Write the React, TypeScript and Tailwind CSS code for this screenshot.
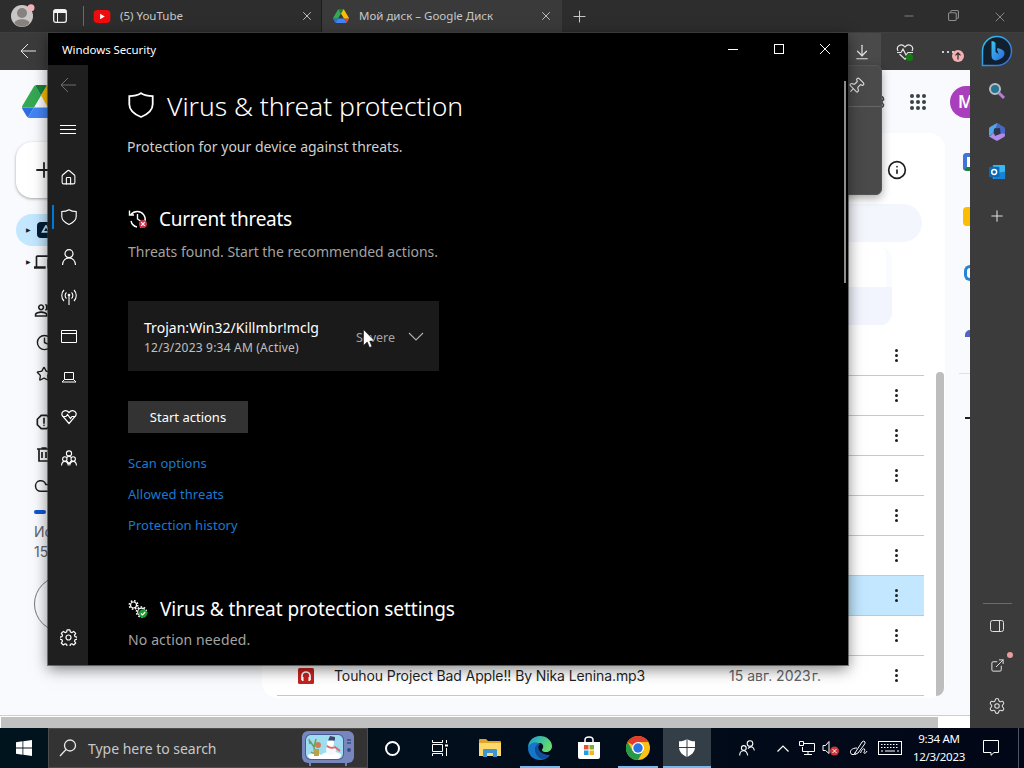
import type { ReactNode } from 'react';
import {
  ArrowDownToLine,
  Clock,
  Cloud,
  ExternalLink,
  House,
  Info,
  Minus,
  Pin,
  Plus,
  Settings,
  Star,
  X,
} from 'lucide-react';
import { MdOutlineDevices, MdOutlinePeopleAlt, MdOutlineReport } from 'react-icons/md';

const rows = [355, 395, 435, 475, 515, 555, 595, 635];

function DriveLogo({ className }: { className: string }) {
  return (
    <svg viewBox="0 0 87.3 78" className={className} preserveAspectRatio="none">
      <path d="m6.6 66.85 3.85 6.65c.8 1.4 1.95 2.5 3.3 3.3l13.75-23.8h-27.5c0 1.55.4 3.1 1.2 4.5z" fill="#2d6fe0" />
      <path d="m43.65 25-13.75-23.8c-1.35.8-2.5 1.9-3.3 3.3l-25.4 44a9.06 9.06 0 0 0 -1.2 4.5h27.5z" fill="#34a853" />
      <path d="m73.55 76.8c1.35-.8 2.5-1.9 3.3-3.3l1.6-2.75 7.65-13.25c.8-1.4 1.2-2.95 1.2-4.5h-27.502l5.852 11.5z" fill="#ea4335" />
      <path d="m43.65 25 13.75-23.8c-1.35-.8-2.9-1.2-4.5-1.2h-18.5c-1.6 0-3.15.45-4.5 1.2z" fill="#188038" />
      <path d="m59.8 53h-32.3l-13.75 23.8c1.35.8 2.9 1.2 4.5 1.2h50.8c1.6 0 3.15-.45 4.5-1.2z" fill="#4285f4" />
      <path d="m73.4 26.5-12.7-22c-.8-1.4-1.95-2.5-3.3-3.3l-13.75 23.8 16.15 28h27.45c0-1.55-.4-3.1-1.2-4.5z" fill="#fbbc04" />
    </svg>
  );
}

function Shield({ className }: { className: string }) {
  return (
    <svg viewBox="0 0 16 16" className={className} fill="none" stroke="currentColor" strokeWidth="1.1">
      <path d="M8 .7C6 2 3.4 2.5.8 2.5V7.5c0 3.6 2.7 6 7.2 7.9 4.5-1.9 7.2-4.3 7.2-7.9V2.5C12.6 2.5 10 2 8 .7Z" />
    </svg>
  );
}

function BackArrow({ className }: { className: string }) {
  return (
    <svg viewBox="0 0 16 16" className={className} fill="none" stroke="currentColor">
      <path d="M16 8H1M8 1 1 8l7 7" />
    </svg>
  );
}

function TabStrip() {
  return (
    <div className="flex h-[33px] shrink-0 items-center border-b border-[#3f3f3f] bg-[#2d2d2d] text-[#c8c8c8]">
      <div className="flex w-[83px] items-center gap-[18px] pl-[11px]">
        <svg viewBox="0 0 24 24" className="h-6 w-6">
          <circle cx="11" cy="12" r="11" fill="#c9c7c5" />
          <circle cx="11" cy="9" r="5" fill="#86827f" />
          <path d="M3.5 19c1-5 14-5 15 0-4 5-11 5-15 0Z" fill="#86827f" />
          <circle cx="20" cy="3.8" r="3.5" fill="#f3b2bb" />
        </svg>
        <svg viewBox="0 0 14 14" className="h-[14px] w-[14px]" fill="none" stroke="#f2f2f2">
          <rect x=".7" y=".7" width="12.6" height="12.6" rx="2" strokeWidth="1.3" />
          <path d="M1 2.5h12" strokeWidth="3" />
          <path d="M4.5 4v9" />
        </svg>
      </div>
      <div className="h-5 w-px bg-[#6a6a6a]" />
      <div className="flex h-full w-[238px] items-center border-r border-[#1c1c1c] pl-[9px] pr-[7px]">
        <svg viewBox="0 0 18 14" className="h-[13px] w-[18px]">
          <rect width="18" height="14" rx="4" fill="#f00c0c" />
          <path d="M7 4v6l5-3z" fill="#fff" />
        </svg>
        <span className="ml-[9px] flex-1 whitespace-nowrap text-[11.5px]">(5) YouTube</span>
        <X className="h-[14px] w-[14px]" strokeWidth={1.6} />
      </div>
      <div className="flex h-full w-[240px] items-center bg-[#3a3a3a] pl-[11px] pr-[9px]">
        <DriveLogo className="h-[14px] w-4" />
        <span className="ml-[10px] flex-1 whitespace-nowrap text-[11.5px]">Мой диск – Google Диск</span>
        <X className="h-[14px] w-[14px]" strokeWidth={1.6} />
      </div>
      <Plus className="ml-[8px] h-[19px] w-[19px]" strokeWidth={1.3} />
      <div className="ml-auto flex w-[138px] justify-around pt-px text-[#8d8d8d]">
        <Minus className="h-[14px] w-[14px]" strokeWidth={1.5} />
        <svg viewBox="0 0 10 10" className="mt-px h-[11px] w-[11px]" fill="none" stroke="currentColor">
          <rect x=".5" y="2.5" width="7" height="7" rx="1" />
          <path d="M2.500 2V1.500a1 1 0 0 1 1-1h5a1 1 0 0 1 1 1v5a1 1 0 0 1-1 1H8" />
        </svg>
        <X className="h-[16px] w-[16px]" strokeWidth={1.4} />
      </div>
    </div>
  );
}

function HeartPulseOutline({ className }: { className: string }) {
  return (
    <svg viewBox="0 0 18 18" className={className} fill="none" stroke="currentColor" strokeWidth="1.2">
      <path d="M2 8C-.5 3 5.500-.5 9 4c3.500-4.500 9.500-1 7 4M3.500 11 9 16.200l5.500-5.200" />
      <path d="M1 9.500h4l2-3.500 3 6 2-2.500h5" />
    </svg>
  );
}

function Toolbar() {
  return (
    <div className="flex h-[37px] shrink-0 items-center bg-[#3b3b3b] text-[#e6e6e6]">
      <BackArrow className="ml-5 h-4 w-4 -mt-px" />
      <div className="ml-auto flex h-full w-[34px] items-center justify-center bg-[#4a4a4a] pr-[5px]">
        <ArrowDownToLine className="h-[18px] w-[18px] shrink-0" strokeWidth={1.6} />
      </div>
      <div className="relative ml-[15px]">
        <HeartPulseOutline className="h-[18px] w-[18px]" />
        <span className="absolute right-[1px] bottom-[0px] h-[7px] w-[7px] rounded-full bg-[#107c10]" />
      </div>
      <div className="relative ml-[28px] flex w-[28px] gap-[3px]">
        <span className="h-[2px] w-[2px] rounded-full bg-white" />
        <span className="h-[2px] w-[2px] rounded-full bg-white" />
        <span className="h-[2px] w-[2px] rounded-full bg-white" />
        <svg viewBox="0 0 12 12" className="absolute -top-px left-[10px] h-3 w-3">
          <circle cx="6" cy="6" r="6" fill="#f4b0b0" />
          <path d="M6 9.500V3M3.500 5.300 6 2.800l2.500 2.500" fill="none" stroke="#2b2b2b" strokeWidth="1.2" />
        </svg>
      </div>
    </div>
  );
}

function DriveNavRow({ children, caret = false }: { children: ReactNode; caret?: boolean }) {
  return (
    <div className="flex h-8 items-center pl-[10px]">
      <span className="w-2 shrink-0 text-[6px]">{caret && '▶'}</span>
      {children}
    </div>
  );
}

function DriveNav() {
  return (
    <div className="flex w-[277px] shrink-0 flex-col pl-4 text-[#1f1f1f]">
      <DriveLogo className="mt-[15px] ml-[6px] h-[33px] w-[38px]" />
      <div className="mt-[24px] flex h-[56px] w-[110px] items-center rounded-2xl bg-white pl-[16px] shadow-[0_1px_3px_rgba(0,0,0,0.35)]">
        <Plus className="h-[24px] w-[24px]" strokeWidth={1.8} />
      </div>
      <div className="mt-4 w-[230px] rounded-full bg-[#c2e7ff]">
        <DriveNavRow caret>
          <span className="ml-[3px] flex h-4 w-[17px] items-center justify-center rounded-sm bg-[#001d35] pb-[3px]">
            <svg viewBox="0 0 10 9" className="h-[8px] w-[10px]" fill="none" stroke="#c2e7ff" strokeWidth="2">
              <path d="M5 1 1.200 7.800h7.600Z" />
            </svg>
          </span>
        </DriveNavRow>
      </div>
      <DriveNavRow caret>
        <MdOutlineDevices className="h-5 w-5" />
      </DriveNavRow>
      <div className="mt-4">
        <DriveNavRow><MdOutlinePeopleAlt className="h-[19px] w-[19px]" /></DriveNavRow>
        <DriveNavRow><Clock className="ml-0.5 h-[17px] w-[17px]" /></DriveNavRow>
        <DriveNavRow><Star className="ml-0.5 h-4 w-4" /></DriveNavRow>
      </div>
      <div className="mt-4">
        <DriveNavRow><MdOutlineReport className="h-5 w-5" /></DriveNavRow>
        <DriveNavRow>
          <svg viewBox="0 0 14 15" className="ml-[3px] h-[15px] w-[14px]" fill="none" stroke="currentColor" strokeWidth="1.7">
            <path d="M0 2h14M4.500 1h5M2 2v12h10V2M5 5v6M9 5v6" />
          </svg>
        </DriveNavRow>
        <DriveNavRow><Cloud className="h-[18px] w-[18px]" /></DriveNavRow>
      </div>
      <div className="ml-[18px] flex flex-col font-[Inter,sans-serif] text-[14px] leading-5 text-[#5f6368]">
        <span className="mt-2 mb-[8px] h-1 w-3 rounded-full bg-[#0b57d0]" />
        <span>Ис</span>
        <span>15</span>
        <span className="mt-[14px] h-[56px] w-[180px] rounded-full border border-[#747775]" />
      </div>
    </div>
  );
}

function Kebab() {
  return (
    <span className="flex flex-col gap-[2px]">
      <span className="h-[3px] w-[3px] rounded-full bg-[#1f1f1f]" />
      <span className="h-[3px] w-[3px] rounded-full bg-[#1f1f1f]" />
      <span className="h-[3px] w-[3px] rounded-full bg-[#1f1f1f]" />
    </span>
  );
}

function DriveFiles() {
  return (
    <div className="flex w-[668px] flex-col">
      {/* Account row */}
      <div className="flex h-[63px] items-center justify-end pr-[19px]">
        <Settings className="mr-[24px] h-5 w-5 text-[#444746]" />
        <span className="grid grid-cols-3 gap-[2px]">
          {[0, 1, 2, 3, 4, 5, 6, 7, 8].map((n) => (
            <span key={n} className="h-1 w-1 rounded-full bg-[#3c4043]" />
          ))}
        </span>
      </div>
      <div className="relative -ml-[15px] flex h-[565px] flex-col rounded-2xl bg-white pl-[15px]">
        <Info className="mt-[27px] ml-[610px] h-[20px] w-[20px] text-[#1f1f1f]" strokeWidth={2} />
        <div className="mt-[24px] h-[38px] w-[645px] rounded-full bg-[#f4f6fd]" />
        <div className="mt-[5px] ml-[400px] h-[78px] w-[215px] rounded-xl border-r-[6px] border-[#fafbff] pt-[40px]">
          <div className="h-[38px] w-[215px] rounded-br-xl bg-[#f2f5fe]" />
        </div>
        <div className="mt-[11px] w-[647px]">
          {rows.map((y) => (
            <div
              key={y}
              className={`flex h-10 items-center justify-end border-b border-[#c7c7c7] pr-[26px] ${
                y === 595 ? 'bg-[#c2e7ff]' : ''
              }`}
            >
              <Kebab />
            </div>
          ))}
          <div className="flex h-10 items-center border-b border-[#c7c7c7] pr-[26px] pl-[21px] font-[Inter,sans-serif] text-[14px]">
            <svg viewBox="0 0 16 16" className="h-4 w-4">
              <rect width="16" height="16" rx="1.500" fill="#c5221f" />
              <path d="M4 12V8a4 4 0 0 1 8 0v4M4.700 9v4M11.300 9v4" fill="none" stroke="#fff" strokeWidth="1.7" />
            </svg>
            <span className="ml-5 w-[395px] whitespace-nowrap tracking-[-0.1px] text-[#1f1f1f]">
              Touhou Project Bad Apple!! By Nika Lenina.mp3
            </span>
            <span className="flex-1 whitespace-nowrap text-[#5f6368]">
              15 авг. 2023<span className="ml-px">г.</span>
            </span>
            <Kebab />
          </div>
        </div>
        <div className="absolute top-[239px] right-[1px] h-[324px] w-2 rounded-t-sm rounded-br-lg bg-[#bdbdbd]" />
      </div>
    </div>
  );
}

function DriveSide() {
  return (
    <div className="flex flex-1 flex-col items-end overflow-hidden">
      <span className="mt-[16px] flex h-8 w-5 shrink-0 items-center overflow-hidden rounded-l-full bg-[#a93fbd] pl-2 text-[17px] font-semibold text-white">
        M
      </span>
      <span className="mt-[35px] h-[18px] w-[7px] rounded-l-sm border-4 border-r-0 border-[#4076d8] border-b-[#188038] bg-white" />
      <span className="mt-[36px] h-[19px] w-[7px] rounded-l-sm bg-[#fbbc04]" />
      <span className="mt-[39px] h-4 w-[6px] rounded-l-full border-[3px] border-r-0 border-[#2684d8]" />
      <span className="mt-[49px] h-[7px] w-[5px] rounded-tl-full bg-[#5461c8]" />
      <span className="mt-[36px] h-px w-[11px] bg-[#dddfe3]" />
      <span className="mt-[43px] h-[2px] w-[5px] bg-[#1f1f1f]" />
    </div>
  );
}

function EdgeSidebar() {
  return (
    <div className="flex w-[54px] shrink-0 flex-col items-center bg-[#3b3b3b] text-[#e0e0e0]">
      <svg viewBox="0 0 32 32" className="mt-[2px] h-8 w-8 shrink-0">
        <defs>
          <linearGradient id="bing" x1="0" y1="0" x2="1" y2="1">
            <stop offset="0" stopColor="#36c6f4" />
            <stop offset="1" stopColor="#3165d8" />
          </linearGradient>
        </defs>
        <path d="M1.500 30.500V16A14.500 14.500 0 1 1 16 30.500Z" fill="#11202c" stroke="url(#bing)" strokeWidth="1.5" />
        <path d="m10.500 6q3 .2 4 2v9l3.200 2-1.700-4.500q-.3-1.700 1.500-1.200Q24 15 23.500 19q-.5 4-8 6.500-5 0-5-5Z" fill="url(#bing)" />
      </svg>
      <svg viewBox="0 0 18 18" className="mt-[15px] h-[18px] w-[18px] shrink-0" fill="none">
        <circle cx="7" cy="7" r="5" fill="#277590" stroke="#b8bfc4" strokeWidth="2" />
        <path d="m11 11 5 5" stroke="#ba7bd8" strokeWidth="3" />
      </svg>
      <svg viewBox="0 0 18 18" className="mt-[23px] h-[18px] w-[18px] shrink-0">
        <path d="M9 0 2 4Q1 4.500 1 6v7l5-3V6l6-4Z" fill="#52a6e5" />
        <path d="m1 13.500 7 4q1 .5 2 0l6-3.500q1-.5 1-2V8l-5 3-5 2-1-3Z" fill="#b08be8" />
        <path d="m9 0 7 4q1 .5 1 2v5l-5-1V6L8 5Z" fill="#4867c2" />
        <path d="m6 6 6-1 .5 5.500L8 12 5.500 10Z" fill="#2e3550" />
      </svg>
      <svg viewBox="0 0 18 18" className="mt-[23px] h-[17px] w-[17px] shrink-0">
        <rect x="4" y="1" width="13" height="15" rx="1" fill="#35baf1" />
        <path d="m5 10 12-2v8H5Z" fill="#1683d8" />
        <rect x="0" y="3" width="11" height="11" rx="1" fill="#0968b8" />
        <circle cx="5.5" cy="8.5" r="2.6" fill="none" stroke="#fff" strokeWidth="1.5" />
      </svg>
      <Plus className="mt-[26px] h-[18px] w-[18px] shrink-0" strokeWidth={1.4} />
      <div className="mt-auto h-px w-[29px] bg-[#6b6b6b]" />
      <svg viewBox="0 0 14 12" className="mt-[16px] h-3 w-[14px] shrink-0" fill="none" stroke="currentColor">
        <rect x=".5" y=".5" width="13" height="11" rx="2" />
        <path d="M9.500 1v10" />
      </svg>
      <div className="relative mt-[26px]">
        <ExternalLink className="h-[15px] w-[15px]" strokeWidth={1.6} />
        <span className="absolute -top-[6px] -right-[8px] h-[6px] w-[6px] rounded-full bg-[#eb9c9c]" />
      </div>
      <Settings className="mt-[24px] mb-[13px] h-[18px] w-[18px] shrink-0" strokeWidth={1.4} />
    </div>
  );
}

function Browser() {
  return (
    <div className="relative flex h-[728px] flex-col">
      <TabStrip />
      <div className="flex min-h-0 flex-1">
        <div className="flex w-[970px] flex-col">
          <Toolbar />
          <div className="flex h-[645px] overflow-hidden bg-[#f8fafd]">
            <DriveNav />
            <DriveFiles />
            <DriveSide />
          </div>
          <div className="h-[13px] border-t border-[#cfcfcf] bg-white pt-px pl-px">
            <div className="h-[11px] w-[937px] bg-[#c1c1c1]" />
          </div>
        </div>
        <EdgeSidebar />
      </div>
      {/* Downloads flyout */}
      <div className="absolute top-[65px] left-[560px] h-[130px] w-[322px] rounded-md border border-[#555] bg-[#4a4a4a] shadow-[0_3px_10px_rgba(0,0,0,0.35)]">
        <div className="flex h-[41px] items-center justify-end border-b border-[#666] pr-[16px] text-[#e4e4e4]">
          <Pin className="h-[18px] w-[18px] rotate-45" strokeWidth={1.5} />
        </div>
      </div>
    </div>
  );
}

function SecurityNav() {
  const svg = 'h-4 w-4 shrink-0';
  return (
    <div className="flex w-10 shrink-0 flex-col items-center bg-[#1f1f1f] pl-px text-white">
      <div className="flex h-[40px] items-center pr-px text-[#6e6e6e]">
        <BackArrow className="h-4 w-4" />
      </div>
      <div className="mt-[4px] flex h-[40px] flex-col justify-center gap-[3px] pr-px">
        <span className="h-px w-4 bg-white" />
        <span className="h-px w-4 bg-white" />
        <span className="h-px w-4 bg-white" />
      </div>
      <div className="mt-[8px] flex h-10 items-center">
        <House className="h-[17px] w-[17px]" strokeWidth={1.5} />
      </div>
      <div className="-ml-px flex h-10 w-10 items-center">
        <span className="ml-1 h-6 w-[2px] bg-[#0078d7]" />
        <Shield className="ml-[7px] h-4 w-4" />
      </div>
      <div className="flex h-10 items-center">
        <svg viewBox="0 0 16 16" className={svg} fill="none" stroke="currentColor" strokeWidth="1.2">
          <circle cx="8" cy="4.7" r="4" />
          <path d="M1.500 16C2 6.500 14 6.500 14.500 16" />
        </svg>
      </div>
      <div className="flex h-10 items-center">
        <svg viewBox="0 0 16 16" className={svg} fill="none" stroke="currentColor" strokeWidth="1.1">
          <path d="M8 6v10M5.500 9.500c-1.800-1.500-1.800-4.500 0-6M10.500 9.500c1.800-1.500 1.800-4.500 0-6M3 12C0 9 0 4 3 1M13 12c3-3 3-8 0-11" />
          <circle cx="8" cy="6" r=".8" />
        </svg>
      </div>
      <div className="flex h-10 items-center">
        <svg viewBox="0 0 16 16" className={svg} fill="none" stroke="currentColor">
          <path d="M.5 1.500h15v12H.5ZM.5 4.500h15" />
        </svg>
      </div>
      <div className="flex h-10 items-center">
        <svg viewBox="0 0 16 16" className={svg} fill="none" stroke="currentColor">
          <path d="M3.500 3.500h9v7h-9ZM3.500 10.500l-2.500 2.500h14l-2.500-2.500" />
        </svg>
      </div>
      <div className="flex h-10 items-center">
        <svg viewBox="0 0 16 16" className={svg} fill="none" stroke="currentColor" strokeWidth="1.2">
          <path d="M8 3.500C4.500-.5-1 3 1.500 7L8 14.500 14.500 7C17 3 11.500-.5 8 3.500Z" />
          <path d="M1.500 7.500H5l1.500-2 3 4 1.500-2h3.500" />
        </svg>
      </div>
      <div className="flex h-[42px] items-center">
        <svg viewBox="0 0 16 16" className={svg} fill="none" stroke="currentColor" strokeWidth="1.1">
          <circle cx="8" cy="3.5" r="2.6" />
          <circle cx="3.8" cy="9" r="2.2" />
          <circle cx="12.2" cy="9" r="2.2" />
          <path d="M.5 15.500c.5-5.500 6-5.500 6.800 0M8.700 15.500c.8-5.500 6.300-5.500 6.800 0M5.500 7.500 8 6l2.500 1.500M6 11l2 2.500 2-2.500" />
        </svg>
      </div>
      <div className="mt-auto mb-[19px]">
        <svg viewBox="-8.500 -8.500 17 17" className="h-[17px] w-[17px]" fill="none" stroke="currentColor" strokeWidth="1.200" strokeLinejoin="round">
          <circle r="2.5" />
          <path d="M-1.400-7.600h2.800l.5 2.100 1.500.6 1.800-1.200 2 2-1.200 1.800.6 1.500 2.100.5v2l-2.100.5-.6 1.500 1.200 1.800-2 2-1.800-1.200-1.500.6-.5 2.100h-2.800l-.5-2.100-1.500-.6-1.800 1.200-2-2 1.200-1.800-.6-1.500-2.100-.5v-2l2.100-.5.6-1.500-1.200-1.800 2-2 1.800 1.200 1.500-.6Z" />
        </svg>
      </div>
    </div>
  );
}

function SecurityContent() {
  return (
    <div className="flex-1 overflow-hidden pl-10">
      <div className="mt-[21px] flex h-[38px] items-center">
        <Shield className="-mt-px h-[26px] w-[26px]" />
        <h1 className="ml-[13px] whitespace-nowrap pt-[3px] text-[26.5px] font-light tracking-[-0.03px]">
          Virus &amp; threat protection
        </h1>
      </div>
      <p className="mt-[13px] -ml-px text-[14px] leading-5 whitespace-nowrap text-[#cfcfcf]">
        Protection for your device against threats.
      </p>
      <div className="mt-[47px] flex h-[30px] items-center">
        <svg viewBox="0 0 20 20" className="h-5 w-5" fill="none" stroke="#fff" strokeWidth="1.4">
          <path d="M3 5.500A8 8 0 1 1 12 18M1.500 1.500v4.500H6M3 12a8 8 0 0 0 6 6M9.500 5v5l3 2" />
          <circle cx="15" cy="15" r="4" fill="#d8304a" stroke="none" />
          <path d="m13.200 13.200 3.600 3.600m0-3.600-3.600 3.600" strokeWidth="1.2" />
        </svg>
        <h2 className="ml-[11px] whitespace-nowrap text-[19px] tracking-[-0.25px]">Current threats</h2>
      </div>
      <p className="mt-[8px] text-[14px] leading-5 tracking-[-0.02px] whitespace-nowrap text-[#a3a3a3]">
        Threats found. Start the recommended actions.
      </p>

      <div className="mt-[39px] flex h-[70px] w-[311px] items-center bg-[#1a1a1a] pt-px pr-[15px] pl-4">
        <div className="flex-1 pt-px">
          <div className="whitespace-nowrap text-[14px] leading-5 tracking-[0.03px]">Trojan:Win32/Killmbr!mclg</div>
          <div className="whitespace-nowrap text-[12px] leading-[19px] tracking-[0.2px] text-[#c0c0c0]">
            12/3/2023 9:34 AM (Active)
          </div>
        </div>
        <span className="mt-[3px] mr-[13px] text-[12.5px] text-[#a5a5a5]">Severe</span>
        <svg viewBox="0 0 16 10" className="h-[10px] w-4" fill="none" stroke="#b0b0b0" strokeWidth="1.1">
          <path d="m1 1 7 7 7-7" />
        </svg>
      </div>
      <button className="mt-[30px] flex h-8 w-[120px] items-center justify-center bg-[#333] pt-px text-[13px]">
        Start actions
      </button>
      <div className="mt-[20px] flex flex-col gap-[11px] text-[13px] leading-5 tracking-[0.06px] text-[#1a7ad0]">
        <a>Scan options</a>
        <a>Allowed threats</a>
        <a>Protection history</a>
      </div>

      <div className="mt-[59px] flex h-[30px] items-center">
        <svg viewBox="0 0 20 20" className="h-5 w-5" fill="none" stroke="#fff">
          <circle cx="5.5" cy="6" r="3" strokeWidth="1.2" />
          <circle cx="5.5" cy="6" r="4.2" strokeWidth="1.6" strokeDasharray="1.6 1.7" />
          <circle cx="13.5" cy="13" r="3.8" strokeWidth="1.2" />
          <circle cx="13.5" cy="13" r="5" strokeWidth="1.6" strokeDasharray="1.6 1.54" />
          <circle cx="15" cy="14.5" r="4.2" fill="#1d9a35" stroke="none" />
          <path d="m13 14.500 1.500 1.500 2.700-3" strokeWidth="1.2" />
        </svg>
        <h2 className="ml-[12px] whitespace-nowrap text-[19px] tracking-[-0.04px]">Virus &amp; threat protection settings</h2>
      </div>
      <p className="mt-[6px] text-[14px] leading-5 tracking-[0.13px] whitespace-nowrap text-[#a3a3a3]">No action needed.</p>
    </div>
  );
}

function SecurityWindow() {
  return (
    <div className="absolute top-[33px] left-[48px] flex h-[632px] w-[800px] flex-col bg-black text-white shadow-[0_4px_14px_rgba(0,0,0,0.5),0_0_0_1px_rgba(70,70,70,0.6)]">
      <div className="flex h-8 shrink-0 items-center pt-px pl-[14px]">
        <span className="flex-1 text-[11.5px] tracking-[-0.08px]">Windows Security</span>
        <svg viewBox="0 0 103 12" className="mr-[17px] h-3 w-[103px]" fill="none" stroke="#fff" shapeRendering="crispEdges">
          <path d="M0 5.500h10M46.500.500h9v9h-9z" />
          <path d="m92 0 10 10m0-10-10 10" shapeRendering="auto" />
        </svg>
      </div>
      <div className="flex min-h-0 flex-1">
        <SecurityNav />
        <SecurityContent />
        <div className="mt-4 mr-[2px] h-[202px] w-[2px] bg-[#8c8c8c]" />
      </div>
    </div>
  );
}

function TaskButton({ children, open = false, active = false }: { children: ReactNode; open?: boolean; active?: boolean }) {
  return (
    <div
      className={`relative flex h-10 w-12 shrink-0 items-center justify-center ${active ? 'bg-[#333e46]' : ''}`}
    >
      {children}
      {open && <span className="absolute bottom-0 h-[2px] w-10 bg-[#76b9ed]" />}
      {active && <span className="absolute bottom-0 h-[2px] w-12 bg-[#76b9ed]" />}
    </div>
  );
}

function SearchHighlight() {
  return (
    <svg viewBox="0 0 54 36" className="h-9 w-[54px]">
      <path d="M9 32v4M45 32v4" stroke="#7484c0" strokeWidth="2" />
      <rect x="1" y="1" width="52" height="32" rx="6" fill="#7787bd" />
      <rect x="4" y="4" width="39" height="26" rx="6" fill="#465b96" />
      <rect x="5" y="5" width="37" height="24" rx="5" fill="#9edcf2" />
      <path d="M7 25c3-2 9-2 13 0 5-4 14-4 20-1 0 5-3 5-8 5H12c-3 0-5-1-5-4Z" fill="#fff" />
      <circle cx="30" cy="20" r="5" fill="#f5f8ff" />
      <circle cx="29.5" cy="13" r="3.5" fill="#fff" />
      <path d="M27 10.500h7V7l-5-1Z" fill="#3d4668" />
      <path d="M26 16q4 3 8 1l5 4" stroke="#e3655f" strokeWidth="1.8" fill="none" />
      <path d="m14 26-1-9-4-6M13 17l2-8M9 14l-1-5M10 22q4 3 7-1" stroke="#66a05e" strokeWidth="1.5" fill="none" />
      <circle cx="17" cy="15" r="3" fill="#c9814f" />
      <path d="M13 19h5v7h-5Z" fill="#b9a04c" />
      <path d="M46 10h4M46 13h4" stroke="#3c4b86" strokeWidth="1.5" />
      <circle cx="48" cy="20" r="2" fill="#3c4b86" />
    </svg>
  );
}

function Taskbar() {
  return (
    <div className="flex h-10 items-center bg-linear-to-r from-[#00141e] to-[#020717] text-white">
      <TaskButton>
        <svg viewBox="0 0 16 16" className="h-4 w-4" fill="#fff">
          <path d="M0 2.200 6.500 1.300V7.600H0ZM7.300 1.200 16 0v7.600H7.300ZM0 8.400h6.500v6.300L0 13.800ZM7.300 8.400H16V16l-8.700-1.200Z" />
        </svg>
      </TaskButton>
      <div className="flex h-10 w-[320px] items-center border border-[#4c4c4c] bg-[#333] pr-[12px] pl-[10px]">
        <svg viewBox="0 0 18 18" className="h-[18px] w-[18px]" fill="none" stroke="#e8e8e8" strokeWidth="1.3">
          <circle cx="11" cy="6.5" r="5.5" />
          <path d="m7 10.500-6 6.500" />
        </svg>
        <span className="ml-[11px] flex-1 whitespace-nowrap text-[14px] tracking-[-0.02px] text-[#c8c8c8]">Type here to search</span>
        <SearchHighlight />
      </div>
      <TaskButton>
        <span className="h-[15px] w-[15px] rounded-full border-2 border-white" />
      </TaskButton>
      <TaskButton>
        <svg viewBox="0 0 16 16" className="h-4 w-4" fill="none" stroke="#fff">
          <path d="M.5 0v2.500h10V0M.5 16v-2.500h10V16M.5 4.500h10v7H.5ZM14.500 0v3M14.500 8v8" />
          <path d="M13 5.500h3" strokeWidth="2" />
        </svg>
      </TaskButton>
      <div className="w-[2px]" />
      <TaskButton>
        <svg viewBox="0 0 22 18" className="h-[18px] w-[22px]">
          <path d="M0 1q0-1 1-1h6l2 2h12q1 0 1 1v14H0Z" fill="#dfa52b" />
          <path d="M0 4h22v13H0Z" fill="#ffd86c" />
          <path d="M4 18v-7q0-1 1-1h12q1 0 1 1v7h-4v-4H8v4Z" fill="#3e95d0" />
        </svg>
      </TaskButton>
      <div className="w-[2px]" />
      <TaskButton open>
        <svg viewBox="0 0 24 24" className="h-6 w-6">
          <defs>
            <linearGradient id="edge" x1="0" y1="0" x2="1" y2=".4">
              <stop offset="0" stopColor="#159ad8" />
              <stop offset="1" stopColor="#65dc6f" />
            </linearGradient>
          </defs>
          <path d="M0 12C0 5 5 0 12 0c7 0 12 5 12 10 0 4-3 6-6 6-4 0-5-2-3-4 1-3-1-5-4-5C5 7 1 9 0 12Z" fill="url(#edge)" />
          <path d="M0 12c1-5 8-7 12-4-5 1-6 6-3 10 3 4 10 4 13 1-3 4-7 5-10 5C5 24 0 19 0 12Z" fill="#1676c8" />
          <path d="M7 13c0-3 2-5 5-5-4 4 0 11 10 11-2 3-6 4-8 4-4-1-7-5-7-10Z" fill="#124f9b" />
        </svg>
      </TaskButton>
      <TaskButton>
        <svg viewBox="0 0 24 24" className="ml-px h-6 w-6">
          <path d="M8 7V4q0-3 4-3t4 3v3" fill="none" stroke="#fff" strokeWidth="1.5" />
          <path d="M1 6h22v15q0 2-2 2H3q-2 0-2-2Z" fill="#fff" />
          <path d="M7 9h4.500v4.500H7Z" fill="#e8502f" />
          <path d="M12.500 9H17v4.500h-4.500Z" fill="#78b42c" />
          <path d="M7 14.500h4.500V19H7Z" fill="#239fdf" />
          <path d="M12.500 14.500H17V19h-4.500Z" fill="#f7b51b" />
        </svg>
      </TaskButton>
      <div className="w-[2px]" />
      <TaskButton open>
        <svg viewBox="0 0 24 24" className="h-6 w-6">
          <circle cx="12" cy="12" r="12" fill="#fbc116" />
          <path d="M12 12 1.600 6A12 12 0 0 1 22.400 6H12Z" fill="#e33b2e" />
          <path d="M1.600 6A12 12 0 0 0 12 24l5.200-9H6.800Z" fill="#259b48" />
          <circle cx="12" cy="12" r="6" fill="#fff" />
          <circle cx="12" cy="12" r="4.7" fill="#2b74e5" />
        </svg>
      </TaskButton>
      <div className="w-px" />
      <TaskButton active>
        <svg viewBox="0 0 18 18" className="h-[18px] w-[18px]">
          <path d="M9 0c2 1.500 5 2.300 8 2.300V8c0 5-3.500 8-8 10-4.500-2-8-5-8-10V2.300C4 2.300 7 1.500 9 0Z" fill="#fff" />
          <path d="M9 0v18M1 8.500h16" stroke="#333e46" />
        </svg>
      </TaskButton>
      <div className="ml-[28px] flex flex-1 items-center">
        <svg viewBox="0 0 16 16" className="h-4 w-4" fill="none" stroke="#fff" strokeWidth="1.1">
          <circle cx="11" cy="3.5" r="2.8" />
          <circle cx="4.8" cy="8" r="2.4" />
          <path d="M.7 15.500c0-6 7-6.500 8 0M9 8.500c3-3 6-1.500 6.300 2" />
        </svg>
        <svg viewBox="0 0 12 7" className="ml-[22px] h-[7px] w-3" fill="none" stroke="#fff" strokeWidth="1.2">
          <path d="M.5 6.500 6 1l5.500 5.500" />
        </svg>
        <svg viewBox="0 0 16 14" className="ml-[10px] h-[14px] w-4" fill="none" stroke="#fff">
          <path d="M5 2.500h10.500v8H3.500V6M.5.500h4v4h-4ZM9 10.500v3M5 13.500h8" />
        </svg>
        <svg viewBox="0 0 18 16" className="ml-[7px] h-4 w-[18px]" fill="none" stroke="#fff">
          <path d="M1 5.500h2.500L7 1.500v12l-3.500-3H1Z" />
          <circle cx="12.5" cy="11" r="4.5" fill="#c93538" stroke="none" />
          <path d="m10.500 9 4 4m0-4-4 4" />
        </svg>
        <svg viewBox="0 0 18 16" className="ml-[10px] h-4 w-[18px]" fill="none" stroke="#fff">
          <path d="M5 13 12 2q2-2 3 0 .5 1-1 3L8 13l-3 1.500ZM7 8C0 8-1 13 2 14.500q3 1 3-2M10.500 13c1-3 3-5 4-4 1 2-1 3-.5 4s2 0 3-2" />
        </svg>
        <svg viewBox="0 0 24 14" className="ml-[10px] h-[14px] w-6" fill="none" stroke="#fff">
          <rect x=".5" y=".5" width="23" height="13" />
          <path d="M3 3.500h18M3 6.500h18" strokeDasharray="1.5 1.5" />
          <path d="M3 10h2M7 10h10M19 10h2" />
        </svg>
        <div className="ml-2 flex w-[58px] flex-col items-center text-[11.5px] leading-[18px] tracking-[-0.3px]">
          <span>9:34 AM</span>
          <span>12/3/2023</span>
        </div>
        <svg viewBox="0 0 16 16" className="ml-[15px] h-4 w-4" fill="none" stroke="#fff">
          <path d="M.5.500h15v12H11L8 15.300V12.500H.5Z" />
        </svg>
      </div>
      <div className="mr-[5px] h-10 w-px bg-[#4b5560]" />
    </div>
  );
}

export default function App() {
  return (
    <div className="relative h-[768px] w-[1024px] overflow-hidden font-['Noto_Sans',sans-serif]">
      <Browser />
      <Taskbar />
      <SecurityWindow />
      <svg viewBox="0 0 12 19" className="absolute top-[329px] left-[363px] h-[19px] w-3">
        <path d="M.5.500v16l3.700-3.500 2.300 5.500 2.500-1-2.300-5.400h5Z" fill="#fff" stroke="#111" strokeWidth=".6" />
      </svg>
    </div>
  );
}
